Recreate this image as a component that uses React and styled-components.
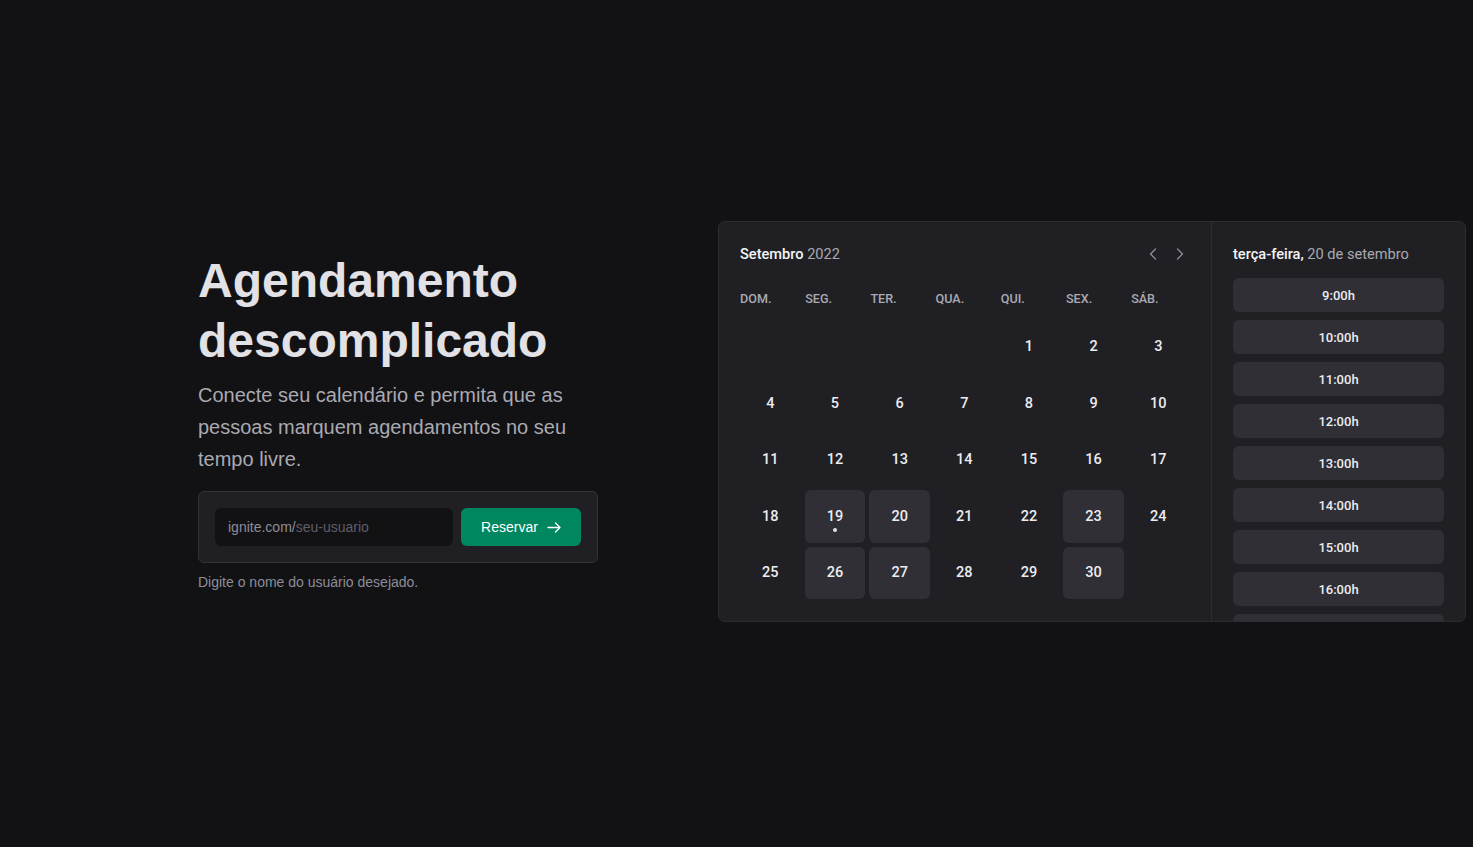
import React from 'react'
import styled, { createGlobalStyle } from 'styled-components'
import { ChevronLeft, ChevronRight } from 'lucide-react'

const GlobalStyle = createGlobalStyle`
  * {
    box-sizing: border-box;
  }
  body {
    margin: 0;
    background: #121214;
    color: #e1e1e6;
    font-family: 'Liberation Sans', Arial, sans-serif;
    overflow: hidden;
  }
`

const Container = styled.main`
  height: 100vh;
  display: flex;
  align-items: center;
  gap: 80px;
  padding-left: 158px;
  padding-bottom: 4px;
`

const Hero = styled.div`
  width: 480px;
  flex-shrink: 0;
  padding: 0 40px;
  margin-top: 2px;
`

const Heading = styled.h1`
  margin: 0;
  font-size: 48px;
  line-height: 60px;
  font-weight: 700;
  color: #e1e1e6;
`

const Lead = styled.p`
  margin: 8px 0 0;
  font-size: 20px;
  line-height: 32px;
  color: #a9a9b2;
`

const Form = styled.form`
  margin-top: 16px;
  display: flex;
  gap: 8px;
  padding: 16px;
  background: #202024;
  border: 1px solid #323238;
  border-radius: 6px;
`

const InputBox = styled.div`
  width: 238px;
  height: 38px;
  display: flex;
  align-items: center;
  padding: 0 13px;
  background: #121214;
  border-radius: 6px;
  font-size: 14px;
`

const Prefix = styled.span`
  color: #8d8d99;
`

const Placeholder = styled.span`
  color: #5e5e66;
`

const SubmitButton = styled.button`
  width: 120px;
  height: 38px;
  display: flex;
  align-items: center;
  justify-content: center;
  gap: 9px;
  padding: 0 0 0 0;
  border: 0;
  border-radius: 6px;
  background: #00875f;
  color: #fff;
  font-family: inherit;
  font-size: 14px;

  svg {
    margin-top: 1px;
  }
`

const Hint = styled.p`
  margin: 8px 0 0;
  font-size: 14px;
  line-height: 1.6;
  color: #8d8d99;
`

const Preview = styled.section`
  width: 748px;
  height: 401px;
  flex-shrink: 0;
  display: grid;
  grid-template-columns: 492px 1fr;
  background: #202024;
  border: 1px solid #2c2c31;
  border-radius: 7px;
  overflow: hidden;
  font-family: Roboto, 'Liberation Sans', sans-serif;
`

const CalendarPane = styled.div`
  padding: 22px 21px;
`

const CalendarHeader = styled.div`
  display: flex;
  align-items: center;
  justify-content: space-between;
  height: 20px;
`

const Title = styled.div`
  font-size: 14.6px;
  font-weight: 500;
  color: #f4f4f6;

  span {
    font-weight: 400;
    color: #a9a9b2;
  }
`

const Arrows = styled.div`
  display: flex;
  gap: 7px;
  color: #8d8d99;
`

const Grid = styled.div`
  display: grid;
  grid-template-columns: repeat(7, 60.67px);
  column-gap: 4px;
  grid-auto-rows: 52.5px;
  row-gap: 4px;
  margin-top: 13.5px;
`

const WeekRow = styled.div`
  display: grid;
  grid-template-columns: repeat(7, 61.2px);
  column-gap: 4px;
  margin-top: 27px;
  height: 16px;
`

const WeekDay = styled.div`
  font-size: 12.6px;
  line-height: 16px;
  font-weight: 500;
  color: #a9a9b2;
`

const Day = styled.div`
  position: relative;
  display: flex;
  align-items: center;
  justify-content: center;
  border-radius: 6px;
  font-size: 14.5px;
  font-weight: 500;
  color: #ececf0;
  background: ${p => (p.$available ? '#2f2f35' : 'transparent')};
`

const TodayDot = styled.i`
  position: absolute;
  left: 50%;
  bottom: 11px;
  width: 4px;
  height: 4px;
  margin-left: -2px;
  border-radius: 50%;
  background: #e1e1e6;
`

const TimePane = styled.div`
  border-left: 1px solid #2c2c31;
  padding: 22px 21px 0 21px;
  overflow: hidden;
`

const TimeTitle = styled.div`
  font-size: 14.6px;
  line-height: 20px;
  font-weight: 500;
  color: #f4f4f6;

  span {
    font-weight: 400;
    color: #a9a9b2;
  }
`

const TimeList = styled.div`
  display: flex;
  flex-direction: column;
  gap: 8px;
  margin-top: 14px;
`

const TimeItem = styled.div`
  height: 34px;
  display: flex;
  align-items: center;
  justify-content: center;
  border-radius: 6px;
  background: #2f2f35;
  font-size: 13px;
  font-weight: 500;
  color: #ececf0;
  flex-shrink: 0;
`

const Arrow = () => (
  <svg width="14" height="11" viewBox="0 0 14 11" fill="none" stroke="currentColor" strokeWidth="1.3" strokeLinecap="round" strokeLinejoin="round">
    <path d="M1 5.5h12M8.5 1l4.5 4.5L8.5 10" />
  </svg>
)

const weekDays = ['DOM.', 'SEG.', 'TER.', 'QUA.', 'QUI.', 'SEX.', 'SÁB.']
const available = [19, 20, 23, 26, 27, 30]
const times = [9, 10, 11, 12, 13, 14, 15, 16]

export default function App() {
  const blanks = Array.from({ length: 4 })
  const days = Array.from({ length: 30 }, (_, i) => i + 1)

  return (
    <>
      <GlobalStyle />
      <Container>
        <Hero>
          <Heading>Agendamento descomplicado</Heading>
          <Lead>
            Conecte seu calendário e permita que as pessoas marquem
            agendamentos no seu tempo livre.
          </Lead>
          <Form onSubmit={e => e.preventDefault()}>
            <InputBox>
              <Prefix>ignite.com/</Prefix>
              <Placeholder>seu-usuario</Placeholder>
            </InputBox>
            <SubmitButton type="submit">
              Reservar
              <Arrow />
            </SubmitButton>
          </Form>
          <Hint>Digite o nome do usuário desejado.</Hint>
        </Hero>

        <Preview>
          <CalendarPane>
            <CalendarHeader>
              <Title>
                Setembro <span>2022</span>
              </Title>
              <Arrows>
                <ChevronLeft size={20} strokeWidth={1.5} />
                <ChevronRight size={20} strokeWidth={1.5} />
              </Arrows>
            </CalendarHeader>
            <WeekRow>
              {weekDays.map(d => (
                <WeekDay key={d}>{d}</WeekDay>
              ))}
            </WeekRow>
            <Grid>
              {blanks.map((_, i) => (
                <div key={'b' + i} />
              ))}
              {days.map(d => (
                <Day key={d} $available={available.includes(d)}>
                  {d}
                  {d === 19 && <TodayDot />}
                </Day>
              ))}
            </Grid>
          </CalendarPane>
          <TimePane>
            <TimeTitle>
              terça-feira, <span>20 de setembro</span>
            </TimeTitle>
            <TimeList>
              {times.map(t => (
                <TimeItem key={t}>{t}:00h</TimeItem>
              ))}
              {/* next slot peeks in under the fold */}
              <TimeItem aria-hidden="true" />
            </TimeList>
          </TimePane>
        </Preview>
      </Container>
    </>
  )
}
